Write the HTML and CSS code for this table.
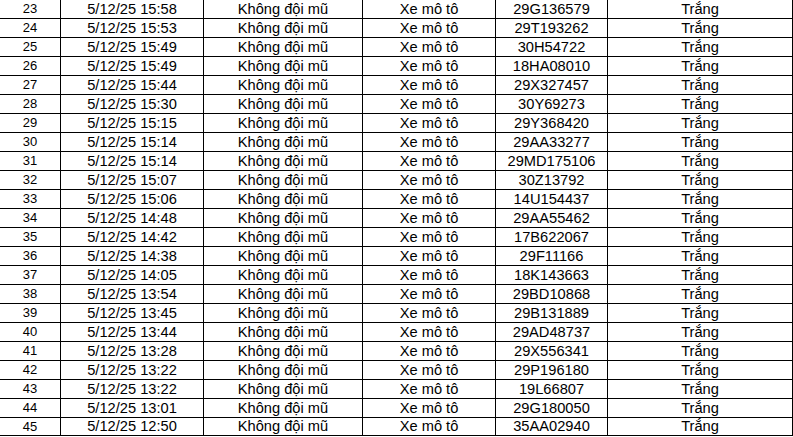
FILE: index.html
```html
<!DOCTYPE html>
<html lang="vi">
<head>
<meta charset="utf-8">
<title>Danh sách vi phạm</title>
<link rel="stylesheet" href="styles.css">
</head>
<body>
<div class="sheet" role="table">
  <div class="row" role="row"><div class="c idx">23</div><div class="c">5/12/25 15:58</div><div class="c">Không đội mũ</div><div class="c">Xe mô tô</div><div class="c">29G136579</div><div class="c">Trắng</div></div>
  <div class="row" role="row"><div class="c idx">24</div><div class="c">5/12/25 15:53</div><div class="c">Không đội mũ</div><div class="c">Xe mô tô</div><div class="c">29T193262</div><div class="c">Trắng</div></div>
  <div class="row" role="row"><div class="c idx">25</div><div class="c">5/12/25 15:49</div><div class="c">Không đội mũ</div><div class="c">Xe mô tô</div><div class="c">30H54722</div><div class="c">Trắng</div></div>
  <div class="row" role="row"><div class="c idx">26</div><div class="c">5/12/25 15:49</div><div class="c">Không đội mũ</div><div class="c">Xe mô tô</div><div class="c">18HA08010</div><div class="c">Trắng</div></div>
  <div class="row" role="row"><div class="c idx">27</div><div class="c">5/12/25 15:44</div><div class="c">Không đội mũ</div><div class="c">Xe mô tô</div><div class="c">29X327457</div><div class="c">Trắng</div></div>
  <div class="row" role="row"><div class="c idx">28</div><div class="c">5/12/25 15:30</div><div class="c">Không đội mũ</div><div class="c">Xe mô tô</div><div class="c">30Y69273</div><div class="c">Trắng</div></div>
  <div class="row" role="row"><div class="c idx">29</div><div class="c">5/12/25 15:15</div><div class="c">Không đội mũ</div><div class="c">Xe mô tô</div><div class="c">29Y368420</div><div class="c">Trắng</div></div>
  <div class="row" role="row"><div class="c idx">30</div><div class="c">5/12/25 15:14</div><div class="c">Không đội mũ</div><div class="c">Xe mô tô</div><div class="c">29AA33277</div><div class="c">Trắng</div></div>
  <div class="row" role="row"><div class="c idx">31</div><div class="c">5/12/25 15:14</div><div class="c">Không đội mũ</div><div class="c">Xe mô tô</div><div class="c">29MD175106</div><div class="c">Trắng</div></div>
  <div class="row" role="row"><div class="c idx">32</div><div class="c">5/12/25 15:07</div><div class="c">Không đội mũ</div><div class="c">Xe mô tô</div><div class="c">30Z13792</div><div class="c">Trắng</div></div>
  <div class="row" role="row"><div class="c idx">33</div><div class="c">5/12/25 15:06</div><div class="c">Không đội mũ</div><div class="c">Xe mô tô</div><div class="c">14U154437</div><div class="c">Trắng</div></div>
  <div class="row" role="row"><div class="c idx">34</div><div class="c">5/12/25 14:48</div><div class="c">Không đội mũ</div><div class="c">Xe mô tô</div><div class="c">29AA55462</div><div class="c">Trắng</div></div>
  <div class="row" role="row"><div class="c idx">35</div><div class="c">5/12/25 14:42</div><div class="c">Không đội mũ</div><div class="c">Xe mô tô</div><div class="c">17B622067</div><div class="c">Trắng</div></div>
  <div class="row" role="row"><div class="c idx">36</div><div class="c">5/12/25 14:38</div><div class="c">Không đội mũ</div><div class="c">Xe mô tô</div><div class="c">29F11166</div><div class="c">Trắng</div></div>
  <div class="row" role="row"><div class="c idx">37</div><div class="c">5/12/25 14:05</div><div class="c">Không đội mũ</div><div class="c">Xe mô tô</div><div class="c">18K143663</div><div class="c">Trắng</div></div>
  <div class="row" role="row"><div class="c idx">38</div><div class="c">5/12/25 13:54</div><div class="c">Không đội mũ</div><div class="c">Xe mô tô</div><div class="c">29BD10868</div><div class="c">Trắng</div></div>
  <div class="row" role="row"><div class="c idx">39</div><div class="c">5/12/25 13:45</div><div class="c">Không đội mũ</div><div class="c">Xe mô tô</div><div class="c">29B131889</div><div class="c">Trắng</div></div>
  <div class="row" role="row"><div class="c idx">40</div><div class="c">5/12/25 13:44</div><div class="c">Không đội mũ</div><div class="c">Xe mô tô</div><div class="c">29AD48737</div><div class="c">Trắng</div></div>
  <div class="row" role="row"><div class="c idx">41</div><div class="c">5/12/25 13:28</div><div class="c">Không đội mũ</div><div class="c">Xe mô tô</div><div class="c">29X556341</div><div class="c">Trắng</div></div>
  <div class="row" role="row"><div class="c idx">42</div><div class="c">5/12/25 13:22</div><div class="c">Không đội mũ</div><div class="c">Xe mô tô</div><div class="c">29P196180</div><div class="c">Trắng</div></div>
  <div class="row" role="row"><div class="c idx">43</div><div class="c">5/12/25 13:22</div><div class="c">Không đội mũ</div><div class="c">Xe mô tô</div><div class="c">19L66807</div><div class="c">Trắng</div></div>
  <div class="row" role="row"><div class="c idx">44</div><div class="c">5/12/25 13:01</div><div class="c">Không đội mũ</div><div class="c">Xe mô tô</div><div class="c">29G180050</div><div class="c">Trắng</div></div>
  <div class="row" role="row"><div class="c idx">45</div><div class="c">5/12/25 12:50</div><div class="c">Không đội mũ</div><div class="c">Xe mô tô</div><div class="c">35AA02940</div><div class="c">Trắng</div></div>
</div>
</body>
</html>
```

FILE: styles.css
```css
html, body {
  margin: 0;
  padding: 0;
  background: #ffffff;
}

.sheet {
  width: 793px;
  font-family: "Liberation Sans", Arial, sans-serif;
  font-size: 14.67px;
  color: #000000;
}

.row {
  display: grid;
  grid-template-columns: 61px 143px 159px 133px 112px 185px;
}

.c {
  box-sizing: border-box;
  height: 19px;
  line-height: 18px;
  border-right: 1px solid #000000;
  border-bottom: 1px solid #000000;
  text-align: center;
  white-space: nowrap;
  overflow: hidden;
}

.row:last-child .c {
  height: 18px;
  line-height: 17px;
}

.idx {
  font-size: 13px;
}
```
